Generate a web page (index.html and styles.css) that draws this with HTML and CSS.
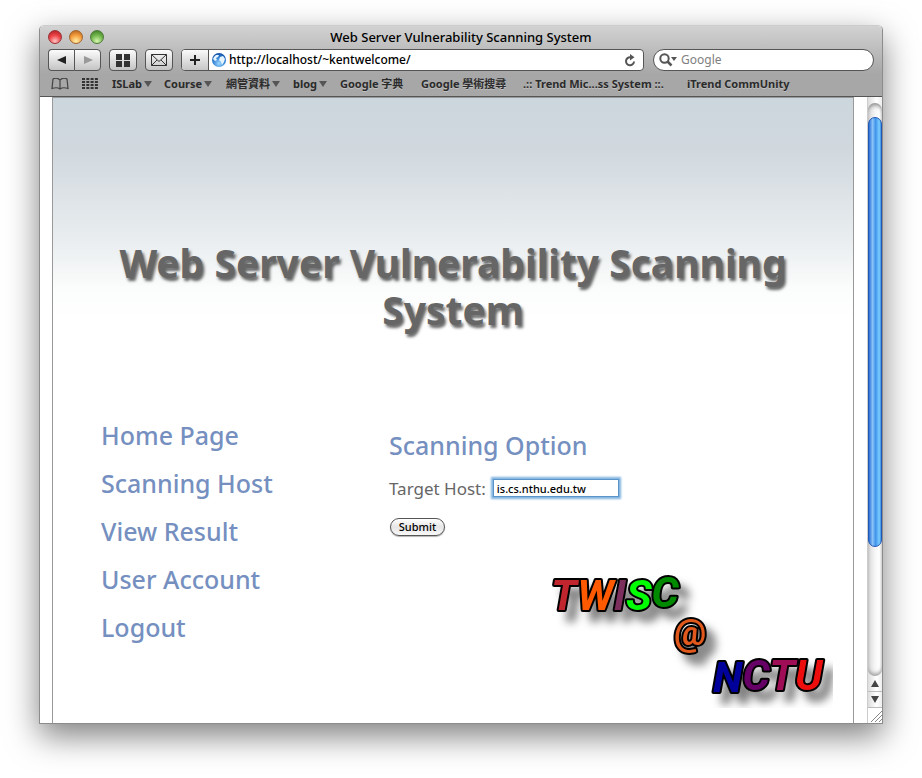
FILE: index.html
```html
<!DOCTYPE html>
<html lang="en">
<head>
<meta charset="utf-8">
<title>Web Server Vulnerability Scanning System</title>
<link rel="stylesheet" href="styles.css">
</head>
<body>
<div class="window">
  <header class="chrome">
    <div class="titlebar">
      <div class="lights">
        <button class="light red" aria-label="Close"></button>
        <button class="light amber" aria-label="Minimize"></button>
        <button class="light green" aria-label="Zoom"></button>
      </div>
      <div class="window-title">Web Server Vulnerability Scanning System</div>
    </div>
    <div class="toolbar">
      <div class="nav-pair">
        <button class="tool" aria-label="Back"><svg width="10" height="10" viewBox="0 0 10 10"><path d="M9 1v8L0 5z" fill="#222"/></svg></button>
        <button class="tool" aria-label="Forward"><svg width="10" height="10" viewBox="0 0 10 10"><path d="M1 1v8l9-4z" fill="#999"/></svg></button>
      </div>
      <button class="tool" aria-label="Top sites"><svg width="14" height="13" viewBox="0 0 14 13"><path d="M0 0h6v6H0zM8 0h6v6H8zM0 7h6v6H0zM8 7h6v6H8z" fill="#333"/></svg></button>
      <button class="tool" aria-label="Mail"><svg width="16" height="12" viewBox="0 0 16 12" fill="none" stroke="#333"><path d="M.5.5h15v11H.5zM.5.5L8 7.500l7.500-7M.5 11.500L6 6M15.500 11.500L10 6"/></svg></button>
      <div class="address">
        <button class="tool add" aria-label="Add bookmark"><svg width="12" height="12" viewBox="0 0 12 12"><path d="M6 1v10M1 6h10" stroke="#222" stroke-width="2"/></svg></button>
        <svg class="globe" width="16" height="16" viewBox="0 0 16 16">
          <defs><radialGradient id="globe" cx=".5" cy=".75" r=".75"><stop offset="0" stop-color="#9fd8ff"/><stop offset=".5" stop-color="#3d8ddc"/><stop offset="1" stop-color="#0d4da8"/></radialGradient></defs>
          <circle cx="8" cy="8" r="7" fill="url(#globe)"/>
          <path d="M3 5l2-2 3 0-1 2-2 1 1 2-2 1-2-2zM9 5l3-1 2 3-1 3-2 3-1-3-2-2z" fill="#e5f4ff"/>
        </svg>
        <input class="url" type="text" aria-label="Address" value="http://localhost/~kentwelcome/">
        <button class="reload" aria-label="Reload"><svg width="12" height="13" viewBox="0 0 12 13"><path d="M6.500 3.300A4 4 0 1 0 10 7.500" fill="none" stroke="#555" stroke-width="2"/><path d="M6 0v6.500L10.500 3.300z" fill="#555"/></svg></button>
      </div>
      <div class="search">
        <svg width="18" height="14" viewBox="0 0 18 14"><circle cx="5.500" cy="5.500" r="4.200" fill="none" stroke="#555" stroke-width="2"/><path d="M8.500 8.500l4 4" stroke="#555" stroke-width="2.500"/><path d="M12 4h6l-3 4z" fill="#555"/></svg>
        <input type="text" aria-label="Search" placeholder="Google">
      </div>
    </div>
    <nav class="bookmarks">
      <button aria-label="Show bookmarks"><svg width="18" height="12" viewBox="0 0 18 12" fill="none" stroke="#444" stroke-width="1.200"><path d="M9 2C7 0 4 0 2 1L1 10.500c3-1 6-1 8 .5 2-1.500 5-1.500 8-.5L16 1c-2-1-5-1-7 1zM9 2v9"/></svg></button>
      <button aria-label="Grid"><svg width="16" height="11" viewBox="0 0 16 11"><path d="M0 1h16M0 4h16M0 7h16M0 10h16" stroke="#333" stroke-width="2" stroke-dasharray="3 1.300"/></svg></button>
      <button>ISLab<i class="caret"></i></button>
      <button>Course<i class="caret"></i></button>
      <button>網管資料<i class="caret"></i></button>
      <button>blog<i class="caret"></i></button>
      <a href="#">Google 字典</a>
      <a href="#">Google 學術搜尋</a>
      <a href="#">.:: Trend Mic...ss System ::.</a>
      <a href="#">iTrend CommUnity</a>
    </nav>
  </header>
  <div class="viewport">
    <div class="page">
      <h1>Web Server Vulnerability Scanning System</h1>
      <div class="columns">
        <nav class="menu">
          <a href="#">Home Page</a>
          <a href="#">Scanning Host</a>
          <a href="#">View Result</a>
          <a href="#">User Account</a>
          <a href="#">Logout</a>
        </nav>
        <main>
          <h2>Scanning Option</h2>
          <form>
            <div class="field">
              <label for="host">Target Host:</label>
              <input id="host" type="text" value="is.cs.nthu.edu.tw">
            </div>
            <button class="submit" type="button">Submit</button>
          </form>
          <svg class="logo" width="300" height="150" viewBox="0 0 300 150" role="img" aria-label="TWISC @ NCTU">
            <defs><filter id="cast" x="-10%" y="-10%" width="130%" height="130%"><feDropShadow dx="9" dy="10" stdDeviation="4" flood-color="#000" flood-opacity=".5"/></filter></defs>
            <g class="brush" filter="url(#cast)">
              <text x="18" y="52"><tspan fill="#c1272d">T</tspan><tspan fill="#ff5a00">W</tspan><tspan fill="#7b2d5b">I</tspan><tspan fill="#0f0">S</tspan><tspan dy="-3" fill="#008a00">C</tspan></text>
              <text class="at" x="141" y="87" fill="#e0591b">@</text>
              <text x="180" y="134"><tspan fill="#00009b">N</tspan><tspan dy="-2" fill="#660066">C</tspan><tspan fill="#9e0b56">T</tspan><tspan fill="#ed0c0c">U</tspan></text>
            </g>
          </svg>
        </main>
      </div>
    </div>
    <div class="scrollbar" aria-hidden="true">
      <div class="track"><div class="thumb"></div></div>
      <div class="step"><svg width="8" height="7" viewBox="0 0 8 7"><path d="M4 0l4 7H0z" fill="#444"/></svg></div>
      <div class="step"><svg width="8" height="7" viewBox="0 0 8 7"><path d="M4 7L0 0h8z" fill="#444"/></svg></div>
      <div class="grip"><svg width="12" height="12" viewBox="0 0 12 12"><path d="M1 12L12 1M5 12l7-7M9 12l3-3" stroke="#888"/></svg></div>
    </div>
  </div>
</div>
</body>
</html>
```

FILE: styles.css
```css
* { box-sizing: border-box; }
body {
  margin: 0;
  padding: 25px 39px 54px;
  min-height: 100vh;
  display: flex;
  background: #fff;
  font-family: "Noto Sans", "Noto Sans CJK TC", sans-serif;
}
button, input { font-family: inherit; }
button { padding: 0; border: 0; background: none; color: inherit; }
a { color: inherit; text-decoration: none; }
svg { display: block; }

.window {
  flex: 1;
  display: flex;
  flex-direction: column;
  border: 1px solid #8c8c8c;
  border-top-color: #ccc;
  border-radius: 5px 5px 0 0;
  box-shadow: 0 12px 32px rgba(0, 0, 0, .5);
}
.chrome {
  background: linear-gradient(#d2d2d2, #a7a7a7 48px);
  border-bottom: 1px solid #555;
  border-radius: 4px 4px 0 0;
}
.titlebar { display: grid; grid-template-columns: 80px 1fr 80px; align-items: center; height: 21px; }
.lights { display: flex; gap: 7px; padding-left: 8px; }
.light { width: 14px; height: 14px; border: 1px solid #555; border-radius: 50%; }
.red { background: radial-gradient(circle at 50% 85%, #ffc4c4, #ee4548 50%, #a8191e); border-color: #9c3237; }
.amber { background: radial-gradient(circle at 50% 85%, #fff0a8, #f5a040 50%, #b05a18); border-color: #a0662f; }
.green { background: radial-gradient(circle at 50% 85%, #d8f7b0, #74b84e 50%, #37751f); border-color: #4c7a3a; }
.window-title { font-size: 13px; font-weight: 500; line-height: 20px; text-align: center; color: #000; }

.toolbar { display: flex; align-items: center; padding: 1px 8px 0; height: 25px; }
.tool {
  display: flex;
  align-items: center;
  justify-content: center;
  width: 28px;
  height: 22px;
  margin-right: 8px;
  border: 1px solid #555;
  border-radius: 4px;
  background: linear-gradient(#fcfcfc, #c4c4c4);
}
.nav-pair { display: flex; margin-right: 8px; }
.nav-pair .tool { width: 27px; margin: 0; }
.nav-pair .tool:first-child { width: 26px; border-radius: 4px 0 0 4px; border-right: 0; }
.nav-pair .tool:last-child { border-radius: 0 4px 4px 0; }
.address {
  flex: 1;
  display: flex;
  align-items: center;
  height: 22px;
  margin-right: 9px;
  border: 1px solid #555;
  border-radius: 4px;
  background: #fff;
  overflow: hidden;
}
.add { border-width: 0 1px 0 0; border-radius: 0; margin: 0; width: 27px; }
.globe { margin: 0 2px; }
.url { flex: 1; min-width: 0; padding: 0; border: 0; outline: 0; font-size: 12px; font-weight: 500; line-height: 18px; color: #000; }
.reload { padding: 0 7px; }
.search {
  display: flex;
  align-items: center;
  gap: 4px;
  width: 221px;
  height: 22px;
  padding: 0 5px;
  border: 1px solid #555;
  border-radius: 11px;
  background: #fff;
}
.search input { flex: 1; min-width: 0; padding: 0; border: 0; outline: 0; font-size: 12px; line-height: 18px; }
.search input::placeholder { color: #808080; opacity: 1; }
.bookmarks {
  display: grid;
  grid-template-columns: 31px 30px 52px 62px 67px 47px 81px 102px 164px 1fr;
  align-items: center;
  height: 24px;
  padding: 0 0 1px 11px;
  color: #2b2b2b;
  font-size: 11px;
  font-weight: bold;
  line-height: 20px;
  white-space: nowrap;
  text-shadow: 0 1px 0 rgba(255, 255, 255, .3);
}
.bookmarks button { display: flex; align-items: center; gap: 2px; font: inherit; }
.caret { border: 4px solid transparent; border-width: 6px 4px 0; border-top-color: #555; }

.viewport { flex: 1; display: flex; background: #fff; }
.page {
  flex: 1;
  margin: 0 13px 0 12px;
  padding: 141px 20px 14px 48px;
  border: 1px solid #999;
  border-bottom: 0;
  background: linear-gradient(#ccd6dd, #d0d8de 50px, #eaeef0 145px, #fbfcfc 190px, #fff 220px);
}
h1 {
  margin: 0 28px 0 0;
  padding: 0 8px;
  text-align: center;
  font-size: 39px;
  line-height: 47px;
  color: #666;
  text-shadow: 2px 3px 3px rgba(0, 0, 0, .6);
}
.columns { display: grid; grid-template-columns: 288px 1fr; padding-top: 78px; }
.menu { display: flex; flex-direction: column; color: #7590c0; font-size: 25px; font-weight: 500; line-height: 48px; }
h2 { margin: 15px 0 0; color: #7590c0; font-size: 25px; font-weight: 500; line-height: 38px; }
.field { display: flex; align-items: center; gap: 7px; height: 24px; margin-top: 12px; color: #666; font-size: 17px; }
.field input {
  width: 126px;
  height: 18px;
  padding: 0 3px;
  border: 1px solid #5a94c8;
  outline: 0;
  box-shadow: 0 0 2px 2px #7fb2e0;
  font-size: 11px;
  font-weight: 500;
}
.submit {
  width: 55px;
  height: 18px;
  margin: 18px 0 0 1px;
  border: 1px solid #555;
  border-radius: 9px;
  background: linear-gradient(#fff, #e6e6e6 50%, #f8f8f8);
  box-shadow: 0 1px 1px rgba(0, 0, 0, .3);
  font-size: 11px;
  font-weight: 500;
  line-height: 16px;
}
.logo { margin: 22px 0 0 auto; }
.brush text {
  font-family: Roboto, sans-serif;
  font-size: 43px;
  font-style: italic;
  font-weight: bold;
  stroke: #000;
  stroke-width: 4px;
  stroke-linejoin: round;
  paint-order: stroke;
}
.brush .at { font-size: 36px; font-style: normal; }

.scrollbar { display: flex; flex-direction: column; width: 15px; border-left: 1px solid #ccc; background: linear-gradient(90deg, #ddd, #fff 60%, #eee); }
.track { flex: 1; margin-top: 6px; padding-top: 14px; border-radius: 7px; background: linear-gradient(90deg, #d8d8d8, #f6f6f6 50%, #fff 80%, #e8e8e8); box-shadow: inset 0 4px 4px -2px #888, inset 0 -4px 4px -2px #999; }
.thumb {
  height: 77%;
  border: 1px solid #2258b5;
  border-radius: 7px;
  background: linear-gradient(90deg, #2b6dd4, #8cc4f8 30%, #3f93ea 55%, #7ccfff 85%, #3b8de0);
}
.step { display: flex; align-items: center; justify-content: center; height: 16px; border-bottom: 1px solid #bbb; }
.grip { padding: 2px; height: 15px; background: #fff; }
```
